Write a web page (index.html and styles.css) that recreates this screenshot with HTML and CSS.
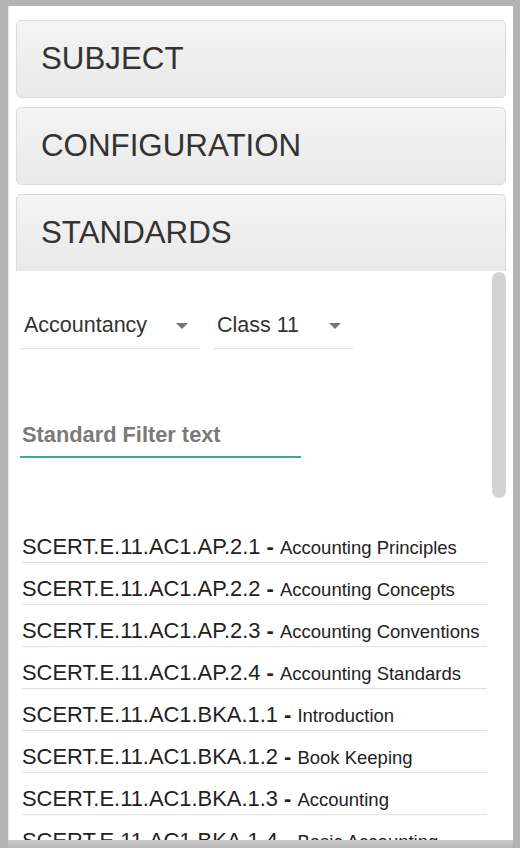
FILE: index.html
```html
<!DOCTYPE html>
<html>
<head>
<meta charset="utf-8">
<link rel="stylesheet" href="styles.css">
</head>
<body>
<div class="frame">
  <div class="panel">
    <div class="acc-head">SUBJECT</div>
    <div class="acc-head">CONFIGURATION</div>
    <div class="acc-head open">STANDARDS</div>
    <div class="acc-body">
      <div class="std-main">
        <div class="selects">
          <div class="select sel-subject"><span>Accountancy</span><span class="caret"></span></div>
          <div class="select sel-class"><span>Class 11</span><span class="caret"></span></div>
        </div>
        <div class="filter"><span class="placeholder">Standard Filter text</span></div>
        <ul class="std-list">
          <li><span class="code">SCERT.E.11.AC1.AP.2.1</span><b class="dash"> - </b><span class="desc">Accounting Principles</span></li>
          <li><span class="code">SCERT.E.11.AC1.AP.2.2</span><b class="dash"> - </b><span class="desc">Accounting Concepts</span></li>
          <li><span class="code">SCERT.E.11.AC1.AP.2.3</span><b class="dash"> - </b><span class="desc">Accounting Conventions</span></li>
          <li><span class="code">SCERT.E.11.AC1.AP.2.4</span><b class="dash"> - </b><span class="desc">Accounting Standards</span></li>
          <li><span class="code">SCERT.E.11.AC1.BKA.1.1</span><b class="dash"> - </b><span class="desc">Introduction</span></li>
          <li><span class="code">SCERT.E.11.AC1.BKA.1.2</span><b class="dash"> - </b><span class="desc">Book Keeping</span></li>
          <li><span class="code">SCERT.E.11.AC1.BKA.1.3</span><b class="dash"> - </b><span class="desc">Accounting</span></li>
          <li><span class="code">SCERT.E.11.AC1.BKA.1.4</span><b class="dash"> - </b><span class="desc">Basic Accounting</span></li>
        </ul>
      </div>
      <div class="scroll"><div class="thumb"></div></div>
    </div>
  </div>
  <div class="bottom-bar"></div>
</div>
</body>
</html>
```

FILE: styles.css
```css
html, body {
  margin: 0;
  padding: 0;
  height: 100%;
  overflow: hidden;
  background: #b3b3b3;
  font-family: "Liberation Sans", Arial, sans-serif;
}

.frame {
  height: 848px;
  padding: 6px 7px 0 8px;
  box-sizing: border-box;
  display: flex;
  flex-direction: column;
}

.panel {
  height: 834px;
  background: #fff;
  padding: 14px 7px 0 8px;
  box-sizing: border-box;
  overflow: hidden;
  box-shadow: inset 2px 0 2px -1px rgba(0,0,0,0.12);
  display: flex;
  flex-direction: column;
}

.bottom-bar {
  flex: 1;
  background: linear-gradient(#c8c8c8, #b8b8b8);
}

.acc-head {
  height: 78px;
  box-sizing: border-box;
  border: 1px solid #dcdcdc;
  border-radius: 5px;
  background: linear-gradient(#f4f4f4, #e9e9e9);
  color: #333;
  font-size: 31.3px;
  display: flex;
  align-items: center;
  padding-left: 24px;
  margin-bottom: 9px;
  flex-shrink: 0;
}

.acc-head.open {
  height: 77px;
  border-radius: 5px 5px 0 0;
  margin-bottom: 0;
  border-bottom: none;
}

.acc-body {
  flex: 1;
  display: flex;
  min-height: 0;
}

.std-main {
  flex: 1;
  padding: 34px 5px 0 4px;
  min-width: 0;
}

.scroll {
  width: 14px;
  flex-shrink: 0;
  padding-top: 1px;
}

.thumb {
  height: 226px;
  background: #d3d3d3;
  border-radius: 7px;
}

.selects {
  display: flex;
  gap: 13px;
}

.select {
  height: 44px;
  box-sizing: border-box;
  border-bottom: 1px solid #e0e0e0;
  display: flex;
  align-items: center;
  justify-content: space-between;
  padding: 0 12px 2px 4px;
  font-size: 21.5px;
  color: #333;
}

.sel-subject { width: 180px; }
.sel-class { width: 140px; }

.caret {
  width: 0;
  height: 0;
  border-left: 6px solid transparent;
  border-right: 6px solid transparent;
  border-top: 6px solid #777;
}

.filter {
  margin-top: 65px;
  width: 281px;
  height: 44px;
  box-sizing: border-box;
  border-bottom: 2px solid #3aaa9c;
  display: flex;
  align-items: center;
  padding: 0 0 0 2px;
}

.placeholder {
  font-weight: bold;
  font-size: 21.8px;
  color: #7a7a7a;
}

.std-list {
  list-style: none;
  margin: 63px 0 0 2px;
  padding: 0;
}

.std-list li {
  height: 42px;
  box-sizing: border-box;
  border-bottom: 1px solid #e0e0e0;
  padding-top: 15px;
  line-height: 22px;
  color: #222;
  white-space: nowrap;
}

.code {
  font-size: 21.9px;
}

.dash {
  font-size: 21.9px;
}

.desc {
  font-size: 18.5px;
}
```
